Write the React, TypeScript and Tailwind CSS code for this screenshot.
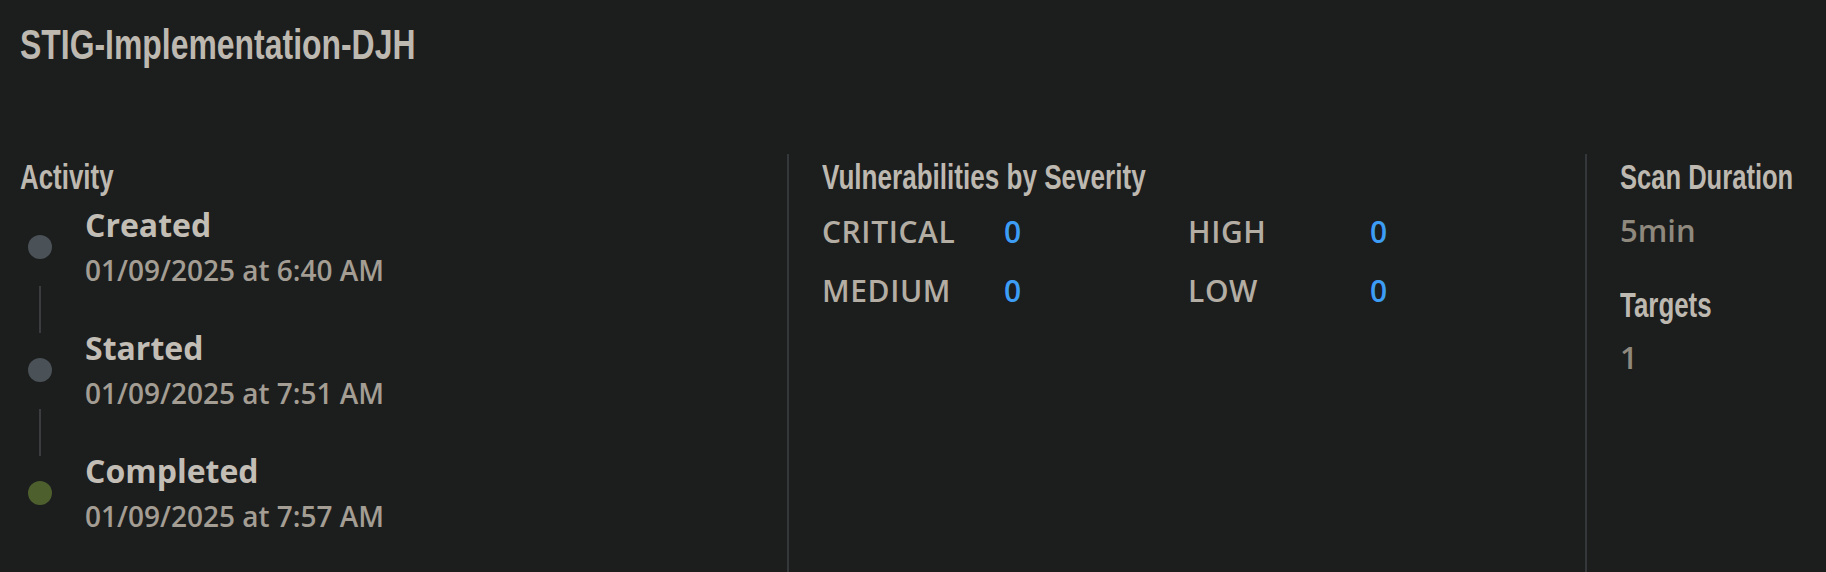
import React from 'react';

const condensed = { fontFamily: '"Liberation Sans", Arial, sans-serif' };
const body = { fontFamily: '"Open Sans", "Noto Sans", sans-serif' };

interface ActivityItem {
  label: string;
  time: string;
  done?: boolean;
}

const activity: ActivityItem[] = [
  { label: 'Created', time: '01/09/2025 at 6:40 AM' },
  { label: 'Started', time: '01/09/2025 at 7:51 AM' },
  { label: 'Completed', time: '01/09/2025 at 7:57 AM', done: true },
];

const severities = [
  { label: 'CRITICAL', count: 0 },
  { label: 'HIGH', count: 0 },
  { label: 'MEDIUM', count: 0 },
  { label: 'LOW', count: 0 },
];

// condensed heading: Liberation Sans squeezed horizontally
const Heading: React.FC<{ children: React.ReactNode; squeeze: string }> = ({ children, squeeze }) => (
  <h2 className="text-[35px] leading-[46px] font-bold text-[#bdb8b0] whitespace-nowrap" style={condensed}>
    <span className={`inline-block origin-left ${squeeze}`}>{children}</span>
  </h2>
);

export default function App() {
  return (
    <div className="min-h-screen w-full bg-[#1c1d1d] px-5 pt-6" style={body}>
      {/* 标题 */}
      <h1 className="text-[42px] leading-none font-bold text-[#bdb8b0] whitespace-nowrap" style={condensed}>
        <span className="inline-block origin-left scale-x-[0.76]">STIG-Implementation-DJH</span>
      </h1>

      <div className="mt-[88px] flex h-[418px]">
        {/* Activity */}
        <section className="w-[767px] shrink-0">
          <Heading squeeze="scale-x-[0.74]">Activity</Heading>
          <div className="mt-[1px] flex flex-col">
            {activity.map((item, i) => (
              <React.Fragment key={item.label}>
                <div className="flex items-center">
                  <div
                    className={`ml-2 h-6 w-6 shrink-0 rounded-full ${item.done ? 'bg-[#4e5f2e]' : 'bg-[#4a5257]'}`}
                  />
                  <div className="ml-[33px]">
                    <div className="text-[32px] leading-[48px] font-bold text-[#c2bdb5]">{item.label}</div>
                    <div className="text-[28px] leading-[43px] font-semibold text-[#a39d93]">{item.time}</div>
                  </div>
                </div>
                {i < activity.length - 1 && (
                  <div className="ml-[19px] -mt-[6px] -mb-[9px] h-[47px] w-[2px] bg-[#3a3c3f]" />
                )}
              </React.Fragment>
            ))}
          </div>
        </section>

        {/* Vulnerabilities */}
        <section className="w-[798px] shrink-0 border-l-2 border-[#35383b] pl-[33px]">
          <Heading squeeze="scale-x-[0.745]">Vulnerabilities by Severity</Heading>
          <div className="mt-[2px] grid grid-cols-[182px_184px_182px_auto]">
            {severities.map((s) => (
              <React.Fragment key={s.label}>
                <div className="text-[30px] leading-[59px] font-semibold tracking-[0.02em] text-[#b3ada3] whitespace-nowrap">
                  {s.label}
                </div>
                <div className="text-[30px] leading-[59px] font-semibold text-[#3d9df5]">{s.count}</div>
              </React.Fragment>
            ))}
          </div>
        </section>

        {/* Scan info */}
        <section className="flex-1 border-l-2 border-[#35383b] pl-[33px]">
          <Heading squeeze="scale-x-[0.73]">Scan Duration</Heading>
          <div className="mt-[10px] text-[31px] leading-[40px] font-semibold text-[#8f887d]">5min</div>
          <div className="mt-[32px]">
            <Heading squeeze="scale-x-[0.74]">Targets</Heading>
          </div>
          <div className="mt-[9px] text-[31px] leading-[40px] font-semibold text-[#8f887d]">1</div>
        </section>
      </div>
    </div>
  );
}
